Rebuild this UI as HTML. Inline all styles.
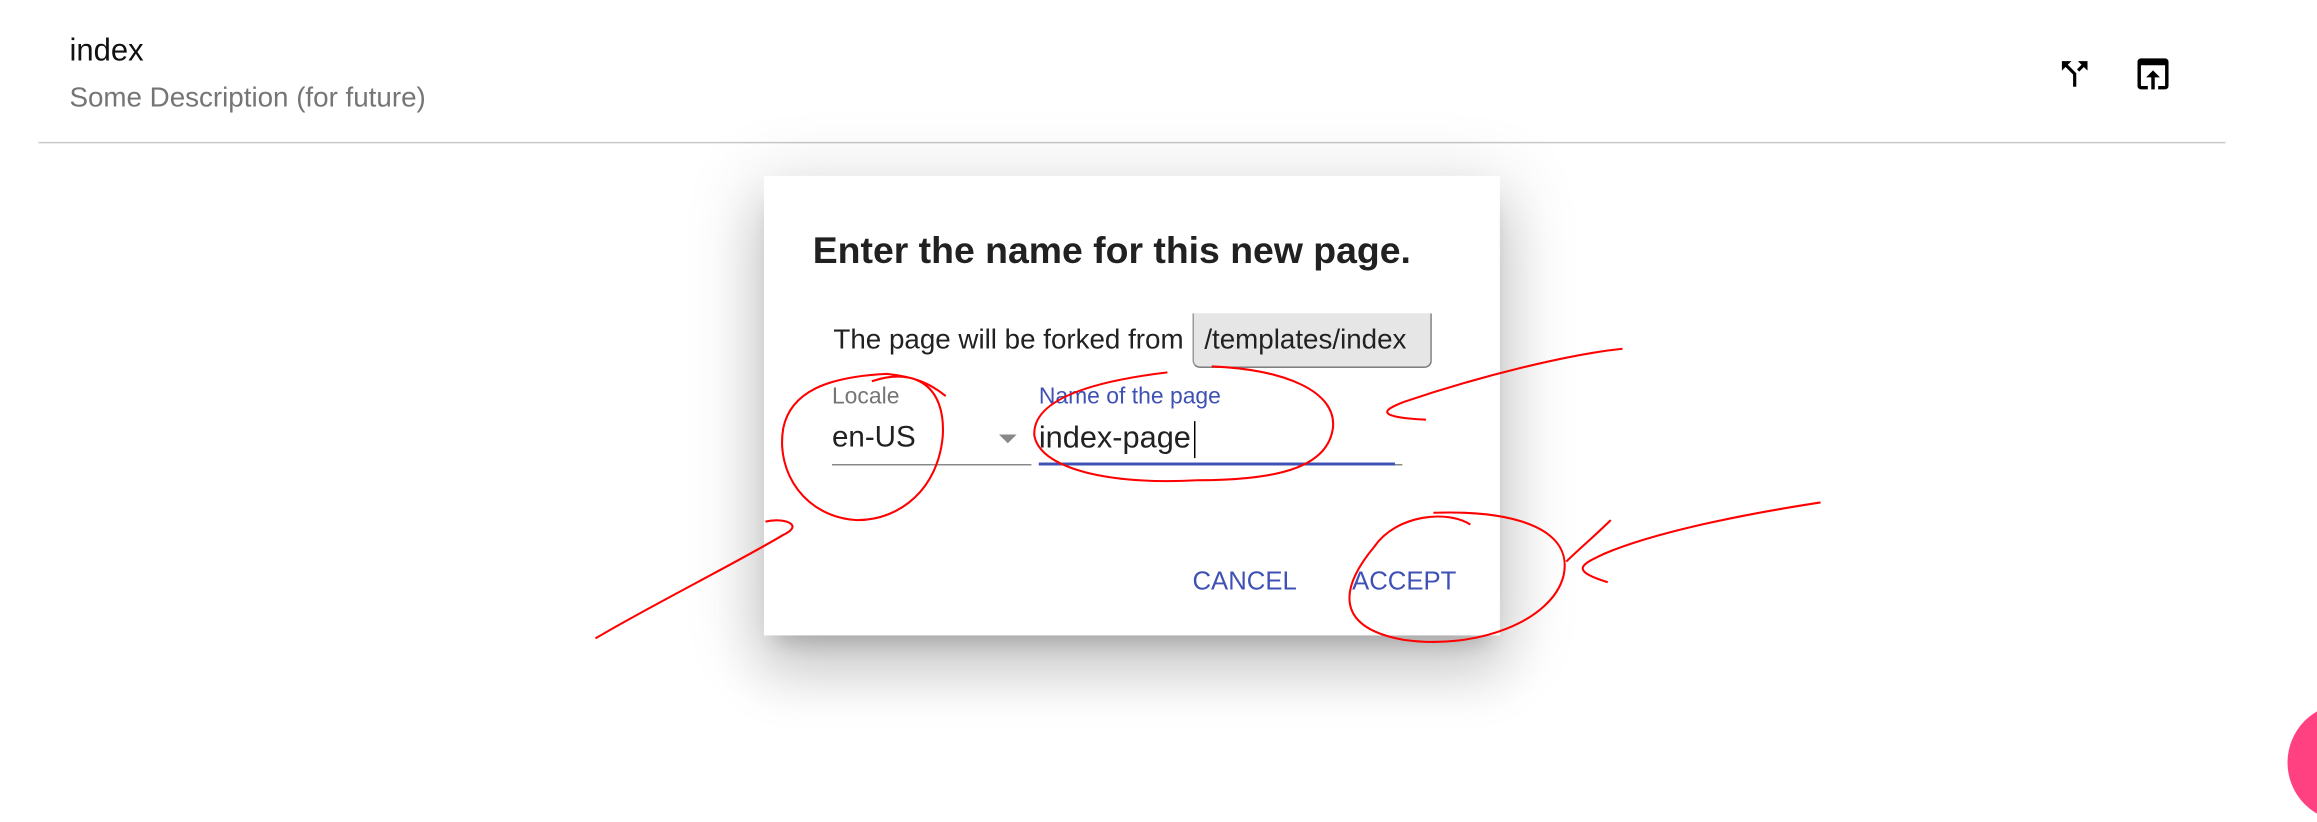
<!DOCTYPE html>
<html><head><meta charset="utf-8"><style>
html,body{margin:0;padding:0;background:#fff;overflow:hidden;width:2317px;height:767px}
#w{position:absolute;left:0;top:0;width:1568px;height:519px;transform:scale(1.4777);transform-origin:0 0;font-family:"Liberation Sans",Arial,sans-serif}
.a{position:absolute;white-space:nowrap}
</style></head><body><div id="w">
<div class="a" style="left:47px;top:23px;font-size:21px;color:#111">index</div>
<div class="a" style="left:47px;top:55px;font-size:18.8px;color:#757575">Some Description (for future)</div>
<svg class="a" style="left:1391px;top:37px" width="26" height="26" viewBox="0 0 24 24"><path d="M14 4l2.29 2.29-2.88 2.88 1.42 1.42 2.88-2.88L20 10V4zm-4 0H4v6l2.29-2.29 4.71 4.7V20h2v-8.41l-5.29-5.3z" fill="#000"/></svg>
<svg class="a" style="left:1443px;top:36px" width="28" height="28" viewBox="0 0 24 24"><path d="M5 3h14a2 2 0 0 1 2 2v14a2 2 0 0 1-2 2h-4v-2h4V7H5v12h4v2H5a2 2 0 0 1-2-2V5a2 2 0 0 1 2-2zm7 7l4 4h-3v7h-2v-7H8z" fill="#000"/></svg>
<div class="a" style="left:26px;top:96px;width:1480px;height:1px;background:#c8c8c8"></div>
<div class="a" style="left:517px;top:119px;width:498px;height:311px;background:#fff;box-shadow:0 11px 15px -7px rgba(0,0,0,.2),0 24px 38px 3px rgba(0,0,0,.14),0 9px 46px 8px rgba(0,0,0,.12)"></div>
<div class="a" style="left:550px;top:156px;font-size:25.3px;font-weight:bold;color:#212121">Enter the name for this new page.</div>
<div class="a" style="left:564px;top:219px;font-size:18.8px;color:#212121">The page will be forked from</div>
<div class="a" style="left:807px;top:212px;width:162px;height:37px;background:#e6e6e6;border-right:1.5px solid #777;border-bottom:1.5px solid #777;border-left:1px solid #999;border-radius:0 0 5px 5px;box-sizing:border-box"></div>
<div class="a" style="left:815px;top:219px;font-size:18.8px;color:#212121">/templates/index</div>
<div class="a" style="left:563px;top:260px;font-size:15.5px;color:#757575">Locale</div>
<div class="a" style="left:563px;top:285px;font-size:20px;color:#212121">en-US</div>
<div class="a" style="left:676px;top:294px;width:0;height:0;border-left:6px solid transparent;border-right:6px solid transparent;border-top:6px solid #888"></div>
<div class="a" style="left:563px;top:314px;width:135px;height:1px;background:#888"></div>
<div class="a" style="left:703px;top:260px;font-size:15.5px;color:#3f51b5">Name of the page</div>
<div class="a" style="left:703px;top:285px;font-size:20.8px;color:#212121">index-page</div>
<div class="a" style="left:808px;top:285px;width:1px;height:25px;background:#000"></div>
<div class="a" style="left:703px;top:314px;width:246px;height:1px;background:#888"></div>
<div class="a" style="left:703px;top:313px;width:241px;height:2px;background:#3f51b5"></div>
<div class="a" style="left:807px;top:383px;font-size:17.4px;color:#3f51b5">CANCEL</div>
<div class="a" style="left:915px;top:383px;font-size:17.4px;color:#3f51b5">ACCEPT</div>
<div class="a" style="left:1548px;top:476px;width:80px;height:80px;border-radius:50%;background:#ff4081"></div>
<svg class="a" style="left:0;top:0" width="1568" height="519" fill="none" stroke="#f00" stroke-width="1.4">
<path d="M590 258 C620 248 640 262 638 295 C635 330 610 352 580 352 C545 350 525 320 530 290 C535 265 560 255 600 253 C620 255 630 260 640 268"/>
<path d="M820 248 C870 250 905 265 902 290 C898 318 860 325 810 325 C760 328 705 320 700 295 C698 270 740 258 790 252"/>
<path d="M1098 236 C1060 240 1000 255 950 272 C940 276 925 282 965 284"/>
<path d="M403 432 C440 410 500 380 530 362 C545 355 530 350 518 353"/>
<path d="M995 355 C980 345 945 348 930 370 C905 400 905 425 950 433 C1000 440 1050 420 1058 390 C1065 360 1030 345 970 347"/>
<path d="M1232 340 C1180 348 1120 360 1085 375 C1070 382 1062 386 1088 394"/>
<path d="M1090 352 C1080 362 1068 372 1060 380"/>
</svg>
</div></body></html>
